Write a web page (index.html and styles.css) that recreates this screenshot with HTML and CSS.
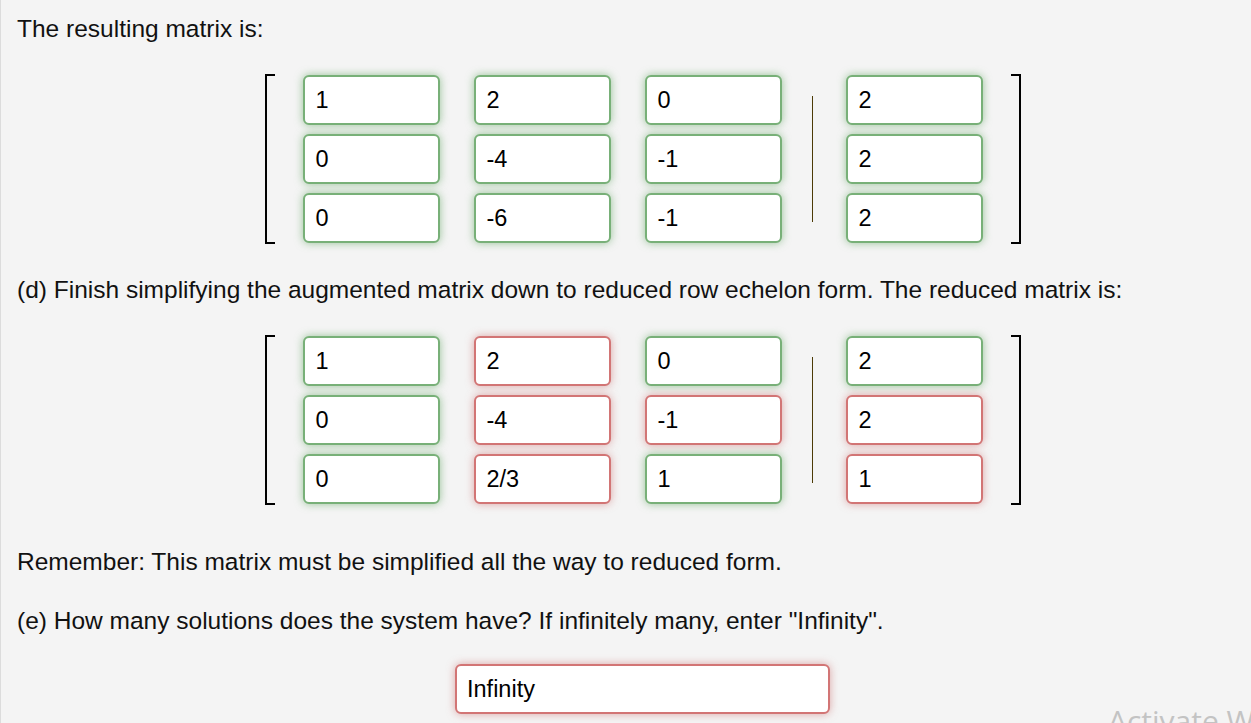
FILE: index.html
```html
<!DOCTYPE html>
<html lang="en">
<head>
<meta charset="utf-8">
<title>Augmented matrix</title>
<link rel="stylesheet" href="styles.css">
</head>
<body>
<div class="page">
  <p class="txt t1">The resulting matrix is:</p>
  <div class="center">
    <div class="matrix">
      <div class="bracket left"></div>
      <div class="coef">
        <div class="col">
          <div class="cell ok">1</div>
          <div class="cell ok">0</div>
          <div class="cell ok">0</div>
        </div>
        <div class="col">
          <div class="cell ok">2</div>
          <div class="cell ok">-4</div>
          <div class="cell ok">-6</div>
        </div>
        <div class="col">
          <div class="cell ok">0</div>
          <div class="cell ok">-1</div>
          <div class="cell ok">-1</div>
        </div>
      </div>
      <div class="sep"></div>
      <div class="col">
        <div class="cell ok">2</div>
        <div class="cell ok">2</div>
        <div class="cell ok">2</div>
      </div>
      <div class="bracket right"></div>
    </div>
  </div>

  <p class="txt t2">(d) Finish simplifying the augmented matrix down to reduced row echelon form. The reduced matrix is:</p>
  <div class="center">
    <div class="matrix">
      <div class="bracket left"></div>
      <div class="coef">
        <div class="col">
          <div class="cell ok">1</div>
          <div class="cell ok">0</div>
          <div class="cell ok">0</div>
        </div>
        <div class="col">
          <div class="cell bad">2</div>
          <div class="cell bad">-4</div>
          <div class="cell bad">2/3</div>
        </div>
        <div class="col">
          <div class="cell ok">0</div>
          <div class="cell bad">-1</div>
          <div class="cell ok">1</div>
        </div>
      </div>
      <div class="sep"></div>
      <div class="col">
        <div class="cell ok">2</div>
        <div class="cell bad">2</div>
        <div class="cell bad">1</div>
      </div>
      <div class="bracket right"></div>
    </div>
  </div>

  <p class="txt t3">Remember: This matrix must be simplified all the way to reduced form.</p>
  <p class="txt t4">(e) How many solutions does the system have? If infinitely many, enter "Infinity".</p>
  <div class="center">
    <div class="answer bad">Infinity</div>
  </div>
</div>
<div class="watermark">Activate Windows</div>
</body>
</html>
```

FILE: styles.css
```css
html, body {
  margin: 0;
  padding: 0;
  height: 100%;
  overflow: hidden;
}

body {
  background: #f4f4f4;
  font-family: "Liberation Sans", Arial, sans-serif;
  color: #111;
}

.page {
  min-height: 100%;
  box-sizing: border-box;
  border-left: 1px solid #dcdcdc;
  padding: 15px 0 0 16px;
}

.txt {
  margin: 0;
  font-size: 24.5px;
  line-height: 28px;
}

.t2 { margin-top: 32px; }
.t3 { margin-top: 43px; }
.t4 { margin-top: 31px; }

.center {
  display: flex;
  justify-content: center;
  padding-left: 17px;
}

.matrix {
  display: flex;
  align-items: center;
  margin-top: 31px;
}

.bracket {
  box-sizing: border-box;
  width: 10px;
  height: 170px;
  border-top: 2px solid #000;
  border-bottom: 2px solid #000;
}

.bracket.left {
  border-left: 2px solid #000;
  margin-right: 28px;
}

.bracket.right {
  border-right: 2px solid #000;
  margin-left: 28px;
}

.coef {
  display: flex;
  gap: 34px;
}

.col {
  display: flex;
  flex-direction: column;
  gap: 9px;
}

.sep {
  width: 64px;
  display: flex;
  justify-content: center;
  box-sizing: border-box;
  padding-right: 2px;
}

.sep::before {
  content: "";
  width: 1.5px;
  height: 126px;
  background: #4d3b06;
}

.cell {
  box-sizing: border-box;
  width: 137px;
  height: 50px;
  background: #fff;
  border: 2px solid;
  border-radius: 6px;
  padding-left: 11px;
  font-size: 23.5px;
  line-height: 46px;
  color: #000;
}

.ok {
  border-color: #78b078;
  box-shadow: 0 0 9px rgba(88, 160, 88, 0.6);
}

.bad {
  border-color: #d27575;
  box-shadow: 0 0 9px rgba(200, 100, 100, 0.55);
}

.answer {
  box-sizing: border-box;
  width: 375px;
  height: 50px;
  margin-top: 29px;
  background: #fff;
  border: 2px solid #d27575;
  border-radius: 6px;
  padding-left: 10px;
  font-size: 23.5px;
  line-height: 46px;
  color: #000;
}

.watermark {
  position: absolute;
  left: 1108px;
  top: 706px;
  font-family: "Open Sans", "Noto Sans", sans-serif;
  font-size: 30px;
  line-height: 30px;
  color: #c3c3c3;
  white-space: nowrap;
}
```
